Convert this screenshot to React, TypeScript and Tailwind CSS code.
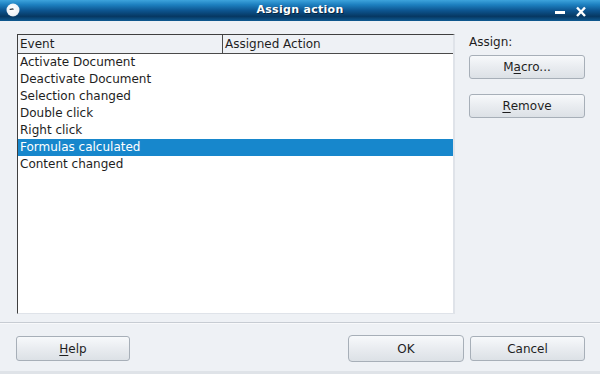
const events = [
  "Activate Document",
  "Deactivate Document",
  "Selection changed",
  "Double click",
  "Right click",
  "Formulas calculated",
  "Content changed",
];

const selected = 5;

const btn =
  "flex items-center justify-center rounded-[3px] border border-[#a7afb8] bg-[linear-gradient(to_bottom,#f7f9fb,#e9ecf0_50%,#dce1e6)] text-[12px] text-[#1e1e1e]";

const TitleBar = () => (
  <div className="relative flex h-[21px] items-center justify-center bg-[linear-gradient(to_bottom,#3da3dc_0%,#1d80c0_22%,#0d5590_50%,#063862_78%,#0f5a92_100%)]">
    {/* window menu icon */}
    <svg className="absolute left-[6px] top-[3px]" width="14" height="14" viewBox="0 0 14 14">
      <defs>
        <radialGradient id="ball" cx="0.45" cy="0.4" r="0.7">
          <stop offset="0" stopColor="#ffffff" />
          <stop offset="0.75" stopColor="#eef1f5" />
          <stop offset="1" stopColor="#aab4c0" />
        </radialGradient>
      </defs>
      <circle cx="7" cy="7" r="6.5" fill="url(#ball)" />
      <path d="M3.2 6 L7 5.2 L8 6.4 L4.2 7 Z" fill="#2a3440" />
    </svg>
    <span className="font-['DejaVu_Sans',sans-serif] text-[11px] font-bold tracking-[0.3px] text-white [text-shadow:1px_1px_0_#06243d]">
      Assign action
    </span>
    <svg className="absolute left-[554px] top-[6px]" width="34" height="12" viewBox="0 0 34 12">
      <rect x="1" y="5" width="10" height="3" fill="#ffffff" />
      <path d="M23 1.5 L31 10 M31 1.5 L23 10" stroke="#ffffff" strokeWidth="2.4" />
    </svg>
  </div>
);

const EventList = () => (
  <div className="h-[280px] w-[438px] overflow-hidden border-t border-l border-t-[#3f3f3f] border-l-[#3f3f3f] border-r-2 border-b border-r-[#dfe3e9] border-b-[#dfe3e9] bg-white">
    <div className="flex h-[19px] border-b border-[#4a4a4a] bg-[#eef1f5] text-[12px] leading-[18px] text-[#1e1e1e]">
      <div className="w-[205px] border-r border-[#4a4a4a] pl-[2px]">Event</div>
      <div className="flex-1 pl-[2px]">Assigned Action</div>
    </div>
    {events.map((e, i) => (
      <div
        key={e}
        className={
          "h-[17px] pl-[2px] text-[12px] leading-[17px] " +
          (i === selected ? "bg-[#1787cc] text-white" : "text-[#1e1e1e]")
        }
      >
        {e}
      </div>
    ))}
  </div>
);

export default function App() {
  return (
    <div className="flex h-[374px] w-[600px] flex-col bg-[#eef1f5] font-['DejaVu_Sans',sans-serif]">
      <TitleBar />
      <div className="flex flex-1 flex-col border-b-[3px] border-[#dfe3e8]">
        <div className="flex pl-[17px] pt-[13px]">
          <EventList />
          <div className="ml-[14px] flex w-[116px] flex-col">
            <div className="mt-[1px] text-[12px] leading-[14px] text-[#1e1e1e]">Assign:</div>
            <button className={btn + " mt-[6px] h-[24px]"}>
              M<span className="underline underline-offset-2">a</span>cro...
            </button>
            <button className={btn + " mt-[15px] h-[24px]"}>
              <span className="underline underline-offset-2">R</span>emove
            </button>
          </div>
        </div>
        <div className="mt-[8px] h-[2px] border-t border-[#c7ccd3] bg-[#f8f9fb]" />
        <div className="flex px-[16px] pt-[12px]">
          <button className={btn + " h-[25px] w-[114px]"}>
            <span className="underline underline-offset-2">H</span>elp
          </button>
          <div className="flex-1" />
          <button className={btn + " h-[27px] w-[116px] -mt-[1px] border-[#3a4856] rounded-[4px]"}>OK</button>
          <button className={btn + " ml-[6px] mr-[-1px] h-[25px] w-[115px]"}>Cancel</button>
        </div>
      </div>
    </div>
  );
}
